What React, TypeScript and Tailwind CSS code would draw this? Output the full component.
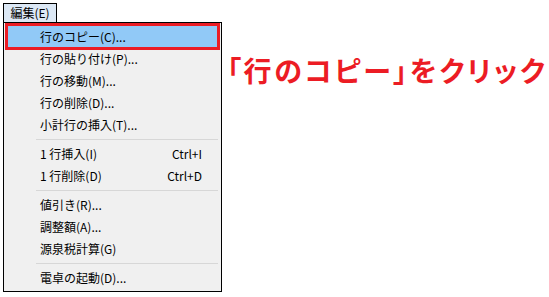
import React from 'react';

type Item =
  | { kind: 'item'; label: string; shortcut?: string; active?: boolean }
  | { kind: 'sep' };

const items: Item[] = [
  { kind: 'item', label: '行のコピー(C)...', active: true },
  { kind: 'item', label: '行の貼り付け(P)...' },
  { kind: 'item', label: '行の移動(M)...' },
  { kind: 'item', label: '行の削除(D)...' },
  { kind: 'item', label: '小計行の挿入(T)...' },
  { kind: 'sep' },
  { kind: 'item', label: '1 行挿入(I)', shortcut: 'Ctrl+I' },
  { kind: 'item', label: '1 行削除(D)', shortcut: 'Ctrl+D' },
  { kind: 'sep' },
  { kind: 'item', label: '値引き(R)...' },
  { kind: 'item', label: '調整額(A)...' },
  { kind: 'item', label: '源泉税計算(G)' },
  { kind: 'sep' },
  { kind: 'item', label: '電卓の起動(D)...' },
];

export default function App() {
  return (
    <div
      className="w-[549px] h-[297px] bg-white flex text-black overflow-hidden"
      style={{ fontFamily: '"Noto Sans CJK JP", "Noto Sans", sans-serif' }}
    >
      <div className="pl-[3px] pt-[3px] flex flex-col">
        <div className="w-[54px] h-[19px] border border-b-0 border-black bg-[#dce8f5] text-[12px] leading-[17px] text-center">
          編集(E)
        </div>
        <div className="w-[219px] border border-black bg-[#f0f0f0] pt-[3px] pb-[2px] text-[12px]">
          {items.map((it, i) =>
            it.kind === 'sep' ? (
              <div key={i} className="h-[7px] flex items-center pl-[32px] pr-[3px]">
                <div className="h-px w-full bg-[#d7d7d7]" />
              </div>
            ) : (
              <div key={i} className="relative h-[22px] flex items-center pl-[36px] pr-[19px]">
                {it.active && (
                  <span className="absolute left-px right-px top-[-3px] bottom-[-2px] bg-[#91c9f7] border-[3px] border-[#ec1c24]" />
                )}
                <span className="relative flex-1 leading-none">{it.label}</span>
                {it.shortcut && <span className="relative leading-none">{it.shortcut}</span>}
              </div>
            )
          )}
        </div>
      </div>
      <div className="pl-[5px] pt-[51px] text-[28px] font-bold text-[#ec1c24] leading-[38px] tracking-[2.6px] whitespace-nowrap [font-feature-settings:'palt']">
        「行のコピー」をクリック
      </div>
    </div>
  );
}
